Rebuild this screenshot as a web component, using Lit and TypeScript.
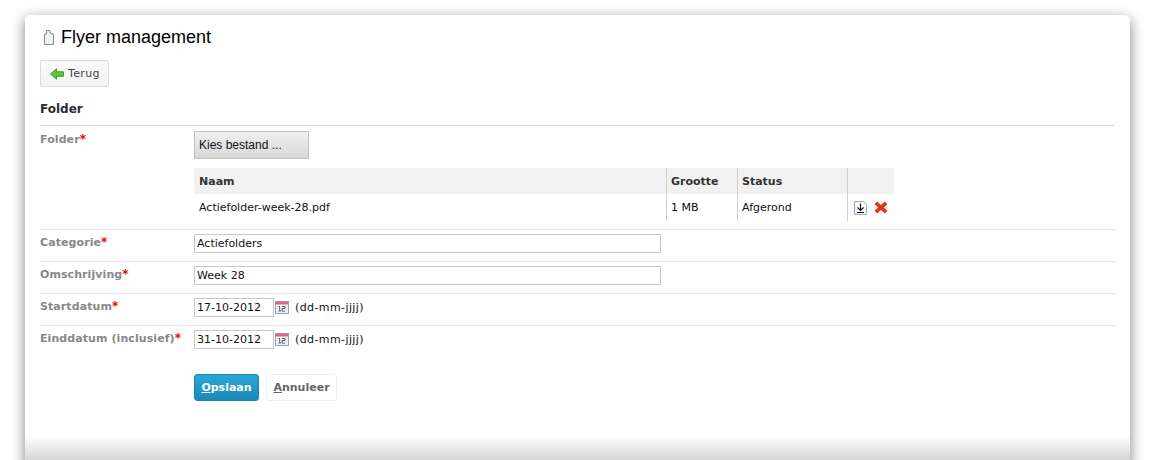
import { LitElement, html, css } from "lit";
import { customElement } from "lit/decorators.js";

const calendar = html`<svg class="cal" width="14" height="13" viewBox="0 0 14 13">
  <rect x="0.5" y="0.5" width="13" height="12" fill="#eeeef8" stroke="#9a9ac8"/>
  <rect x="1" y="1" width="12" height="2.500" fill="#e0687a"/>
  <rect x="3" y="4.500" width="8" height="6.500" fill="#fff"/>
  <path d="M3.500 5.500h1.200V10M3.500 10h2.500M7 5.500h3v2H7V10h3.200" fill="none" stroke="#555" stroke-width="1"/>
</svg>`;

@customElement("app-root")
export class AppRoot extends LitElement {
  static styles = css`
    :host { display: block; height: 460px; overflow: hidden; background: #fff; font-family: "DejaVu Sans", Verdana, sans-serif; font-size: 11px; color: #111; }
    .page { padding: 15px 25px 0; height: 445px; }
    .card { height: 460px; background: #fff; border-radius: 5px; box-shadow: 0 4px 14px rgba(0,0,0,.5); padding: 0 15px; position: relative; box-sizing: border-box; }
    .fade { position: absolute; left: 0; right: 0; top: 420px; height: 25px; background: linear-gradient(#fff, #d6d6d6); pointer-events: none; }
    .title { display: flex; align-items: center; gap: 7px; height: 45px; box-sizing: border-box; padding: 0 0 0 4px; font: 18px "Liberation Sans", Arial, sans-serif; color: #000; }
    .back { display: inline-flex; align-items: center; gap: 4px; box-sizing: border-box; width: 69px; height: 27px; padding-left: 9px; border: 1px solid #dcdcdc; border-radius: 2px; background: linear-gradient(#fbfbfb, #f1f1f1); color: #444; font-size: 11px; letter-spacing: .35px; }
    .toolbar { height: 27px; display: flex; }
    .section { margin-top: 12px; height: 27px; padding-top: 3px; box-sizing: border-box; border-bottom: 1px solid #d4d4d4; font: bold 12px "DejaVu Sans", Verdana, sans-serif; color: #2a2a33; }
    .row { display: grid; grid-template-columns: 154px 1fr; border-bottom: 1px solid #e8e8e8; box-sizing: border-box; height: 32px; padding-top: 4px; }
    .row.first { height: 104px; padding-top: 5px; }
    .row.last { border-bottom: none; }
    .label { font-weight: bold; color: #888; padding-top: 1px; white-space: nowrap; letter-spacing: .08px; }
    .label b { color: #f00000; font-size: 12px; }
    .upload { width: 115px; height: 28px; box-sizing: border-box; border: 1px solid #c0c0c0; background: linear-gradient(#f0f0f0, #d8d8d8); font: 12px "Liberation Sans", Arial, sans-serif; color: #111; display: flex; align-items: center; padding-left: 4px; }
    .files { margin-top: 9px; width: 700px; display: grid; grid-template-columns: 472px 71px 110px 47px; grid-template-rows: 26px 27px; }
    .files > div { padding-left: 5px; box-sizing: border-box; display: flex; align-items: center; white-space: nowrap; }
    .files > .sep { padding-left: 4px; border-left: 1px solid #d0d0d0; }
    .head { background: #f1f1f1; font-weight: bold; color: #333; }
    .files > .actions { gap: 7px; padding-left: 6px; }
    input { font: 11px "DejaVu Sans", Verdana, sans-serif; color: #111; box-sizing: border-box; height: 19px; border: 1px solid #c8c8c8; padding: 0 2px; margin: 0; background: #fff; display: block; outline: none; }
    .wide { width: 467px; }
    .date { width: 80px; }
    .dateline { display: flex; align-items: center; height: 19px; gap: 1px; }
    .cal { margin-right: 5px; }
    .hint { letter-spacing: .4px; }
    .buttons { display: flex; gap: 7px; margin: 16px 0 0 154px; }
    .save, .cancel { box-sizing: border-box; height: 27px; border-radius: 3px; font-weight: bold; font-size: 11px; display: flex; align-items: center; justify-content: center; }
    .save { width: 65px; background: linear-gradient(#2ba6d6, #1a8ab8); border: 1px solid #1a86b0; color: #fff; }
    .cancel { width: 71px; background: #fff; border: 1px solid #eeeeee; color: #666; }
  `;

  render() {
    return html`<div class="page"><div class="card">
      <div class="title">
        <svg width="10" height="15" viewBox="0 0 10 15"><path d="M2.500 .5h3.500v2.500h1v1h2.500v10.500h-9v-10.500h2z" fill="#eef0f4" stroke="#8a8a8a"/></svg>
        <span>Flyer management</span>
      </div>
      <div class="toolbar"><div class="back">
        <svg width="14" height="12" viewBox="0 0 14 12"><path d="M.5 6 6.500 .8v3h7v4.400h-7v3z" fill="#5cc83a" stroke="#3d9c22"/></svg>
        <span>Terug</span>
      </div></div>
      <div class="section">Folder</div>
      <div class="row first">
        <div class="label">Folder<b>*</b></div>
        <div>
          <div class="upload">Kies bestand ...</div>
          <div class="files">
            <div class="head">Naam</div><div class="head sep">Grootte</div><div class="head sep">Status</div><div class="head sep"></div>
            <div>Actiefolder-week-28.pdf</div><div class="sep">1 MB</div><div class="sep">Afgerond</div>
            <div class="sep actions">
              <svg width="13" height="14" viewBox="0 0 13 14"><path d="M.5 .5h9l3 3v10h-12z" fill="#f6f8fc" stroke="#9aa8c4"/><path d="M6.500 2.500v7M3.500 6.500l3 3 3-3M3 11.500h7" fill="none" stroke="#111" stroke-width="1.100"/></svg>
              <svg width="14" height="13" viewBox="0 0 14 13"><path d="M1.800 1.800 12.200 11.200M12.200 1.800 1.800 11.200" stroke="#e0341a" stroke-width="3.700"/></svg>
            </div>
          </div>
        </div>
      </div>
      <div class="row"><div class="label">Categorie<b>*</b></div><div><input class="wide" value="Actiefolders"></div></div>
      <div class="row"><div class="label">Omschrijving<b>*</b></div><div><input class="wide" value="Week 28"></div></div>
      <div class="row"><div class="label">Startdatum<b>*</b></div><div class="dateline"><input class="date" value="17-10-2012">${calendar}<span class="hint">(dd-mm-jjjj)</span></div></div>
      <div class="row last"><div class="label">Einddatum (inclusief)<b>*</b></div><div class="dateline"><input class="date" value="31-10-2012">${calendar}<span class="hint">(dd-mm-jjjj)</span></div></div>
      <div class="buttons">
        <div class="save"><span><u>O</u>pslaan</span></div>
        <div class="cancel"><span><u>A</u>nnuleer</span></div>
      </div>
      <div class="fade"></div>
    </div></div>`;
  }
}
